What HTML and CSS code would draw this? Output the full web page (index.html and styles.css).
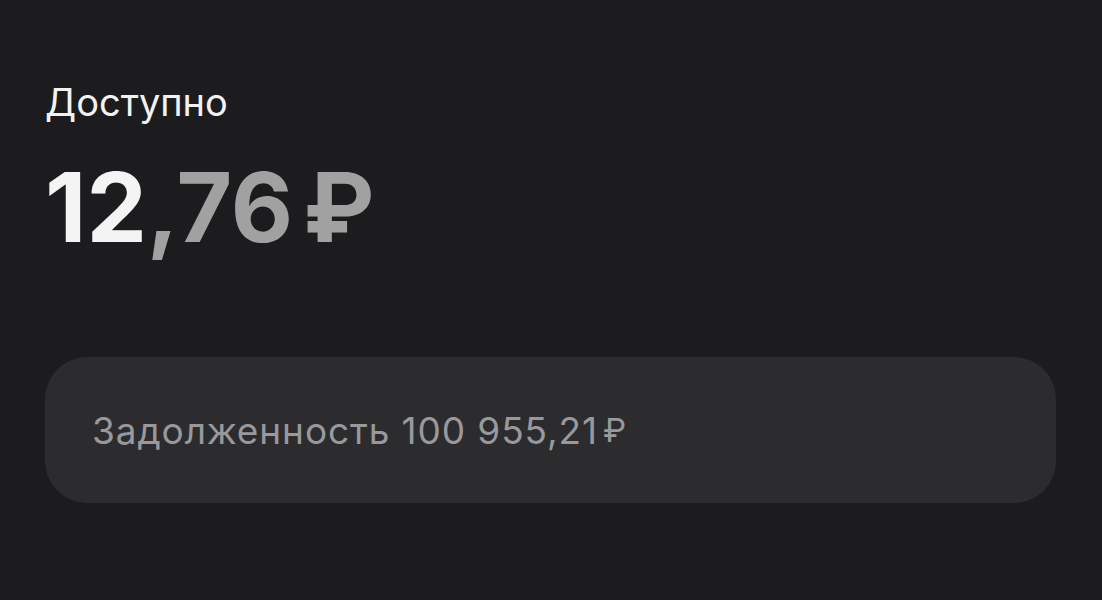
FILE: index.html
```html
<!DOCTYPE html>
<html lang="ru">
<head>
    <meta charset="UTF-8">
    <meta name="viewport" content="width=device-width, initial-scale=1.0">
    <title>Доступно</title>
    <link rel="stylesheet" href="styles.css">
</head>
<body>

    <div class="balance">
        <div class="label">Доступно</div>
        <div class="amount"><span class="whole">12</span><span class="fraction">,76</span><span class="currency">₽</span></div>

        <div class="debt-card">
            <span class="debt-text">Задолженность 100 955,21</span><span class="debt-currency">₽</span>
        </div>
    </div>

</body>
</html>
```

FILE: styles.css
```css
body {
    margin: 0;
    background-color: #1c1c1e;
    font-family: Inter, "Noto Sans", sans-serif;
    height: 600px;
    overflow: hidden;
}
.balance {
    padding: 78px 46px 0 45px;
}
.label {
    font-size: 38px;
    line-height: 48px;
    color: #f2f2f2;
}
.amount {
    margin-top: 26px;
    font-size: 96px;
    line-height: 110px;
    font-weight: 700;
    letter-spacing: 0;
}
.whole {
    color: #f4f4f4;
}
.fraction {
    color: #a1a1a1;
}
.currency {
    color: #a1a1a1;
    margin-left: 10px;
}
.debt-card {
    margin-top: 95px;
    height: 146px;
    border-radius: 42px;
    background: #2c2c2e;
    display: flex;
    align-items: center;
    padding-left: 47px;
    color: #98989d;
    font-size: 37px;
}
.debt-text {
    letter-spacing: 0.9px;
}
.debt-currency {
    margin-left: 5px;
    font-size: 33px;
}
```
